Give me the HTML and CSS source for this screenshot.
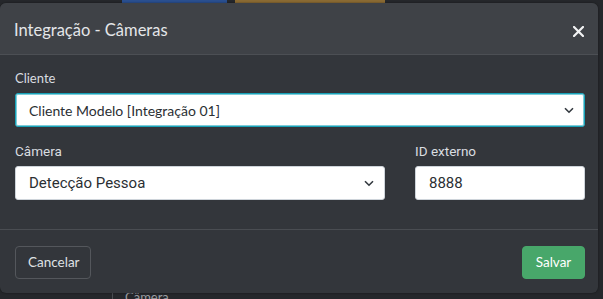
FILE: index.html
```html
<!DOCTYPE html>
<html lang="pt-BR">
<head>
<meta charset="utf-8">
<title>Integração - Câmeras</title>
<link rel="stylesheet" href="styles.css">
</head>
<body>
<div class="backdrop">
  <span class="strip strip-blue"></span>
  <span class="strip strip-orange"></span>
  <span class="back-line"></span>
  <span class="back-text">Câmera</span>
</div>
<div class="modal">
  <div class="modal-header">
    <h5 class="modal-title">Integração - Câmeras</h5>
    <svg class="close" width="11" height="11" viewBox="0 0 11 11"><path d="M1 1 L10 10 M10 1 L1 10" stroke="#f2f3f4" stroke-width="2.2" stroke-linecap="square"/></svg>
  </div>
  <div class="modal-body">
    <div class="group">
      <label class="label label-n">Cliente</label>
      <div class="select select-focus font-n">
        <span>Cliente Modelo [Integração 01]</span>
        <svg class="chev" width="10" height="7" viewBox="0 0 10 7"><path d="M1 1.2 L5 5.2 L9 1.2" fill="none" stroke="#343a40" stroke-width="1.6"/></svg>
      </div>
    </div>
    <div class="row">
      <div class="group col-cam">
        <label class="label">Câmera</label>
        <div class="select">
          <span>Detecção Pessoa</span>
          <svg class="chev" width="10" height="7" viewBox="0 0 10 7"><path d="M1 1.2 L5 5.2 L9 1.2" fill="none" stroke="#343a40" stroke-width="1.6"/></svg>
        </div>
      </div>
      <div class="group col-id">
        <label class="label">ID externo</label>
        <div class="select">
          <span>8888</span>
        </div>
      </div>
    </div>
  </div>
  <div class="modal-footer">
    <button class="btn btn-cancel">Cancelar</button>
    <button class="btn btn-save">Salvar</button>
  </div>
</div>
</body>
</html>
```
FILE: styles.css
```css
html, body {
  margin: 0;
  padding: 0;
}
body {
  width: 603px;
  height: 299px;
  background: #25272b;
  overflow: hidden;
  position: relative;
  font-family: Roboto, "Liberation Sans", Arial, sans-serif;
}
.backdrop {
  position: absolute;
  inset: 0;
}
.strip {
  position: absolute;
  top: 0;
  height: 3px;
}
.strip-blue {
  left: 122px;
  width: 105px;
  background: #2a4f8f;
}
.strip-orange {
  left: 235px;
  width: 150px;
  background: #8a6a33;
}
.back-line {
  position: absolute;
  left: 112px;
  top: 290px;
  width: 1px;
  height: 10px;
  background: #4a4d52;
}
.back-text {
  position: absolute;
  left: 125px;
  top: 289px;
  font-family: Lato, sans-serif;
  font-size: 13px;
  line-height: 16px;
  color: #9a9da2;
}
.modal {
  position: relative;
  margin-top: 3px;
  width: 598px;
  height: 290px;
  background: #33363b;
  border-radius: 6px;
  display: flex;
  flex-direction: column;
  overflow: hidden;
  box-shadow: 0 0 2px rgba(0,0,0,0.5);
}
.modal-header {
  background: #3f4247;
  border-bottom: 1px solid #4c4f54;
  display: flex;
  align-items: center;
  justify-content: space-between;
  padding: 0 14px 0 14px;
  box-sizing: border-box;
  height: 52px;
}
.modal-title {
  margin: 0;
  font-family: Lato, sans-serif;
  font-weight: 400;
  font-size: 16.5px;
  color: #e4e6e9;
  padding-top: 2px;
}
.close {
  margin-top: 5px;
}
.modal-body {
  padding: 13px 13px 0 15px;
  height: 175px;
  box-sizing: border-box;
  border-bottom: 1px solid #4a4d52;
}
.group {
  display: flex;
  flex-direction: column;
}
.label {
  font-size: 13.5px;
  line-height: 21px;
  color: #dadde0;
  margin-bottom: 4px;
}
.label-n {
  font-family: Lato, sans-serif;
  font-size: 13px;
}
.select {
  height: 34px;
  box-sizing: border-box;
  background: #fff;
  border: 1px solid #ced4da;
  border-radius: 3px;
  display: flex;
  align-items: center;
  justify-content: space-between;
  padding: 0 10px 0 13px;
  font-size: 15px;
  color: #2b2f33;
}
.font-n {
  font-family: Lato, sans-serif;
  font-size: 14px;
}
.select-focus {
  border-color: #17a2b8;
  box-shadow: inset 0 0 0 1px rgba(23,162,184,0.55);
}
.chev {
  flex: none;
}
.row {
  display: flex;
  gap: 30px;
  margin-top: 14px;
}
.col-cam {
  width: 370px;
}
.col-id {
  width: 170px;
}
.modal-footer {
  flex: 1;
  display: flex;
  align-items: center;
  justify-content: space-between;
  padding: 0 13px 0 15px;
}
.btn {
  height: 33px;
  border-radius: 4px;
  font-family: Lato, sans-serif;
  font-size: 13.5px;
  padding: 0 12px;
  box-sizing: border-box;
  margin-top: 1px;
}
.btn-cancel {
  width: 76px;
  background: transparent;
  border: 1px solid #54575c;
  color: #dfe1e4;
}
.btn-save {
  width: 63px;
  background: #48a76a;
  border: 1px solid #48a76a;
  color: #fff;
}
```
